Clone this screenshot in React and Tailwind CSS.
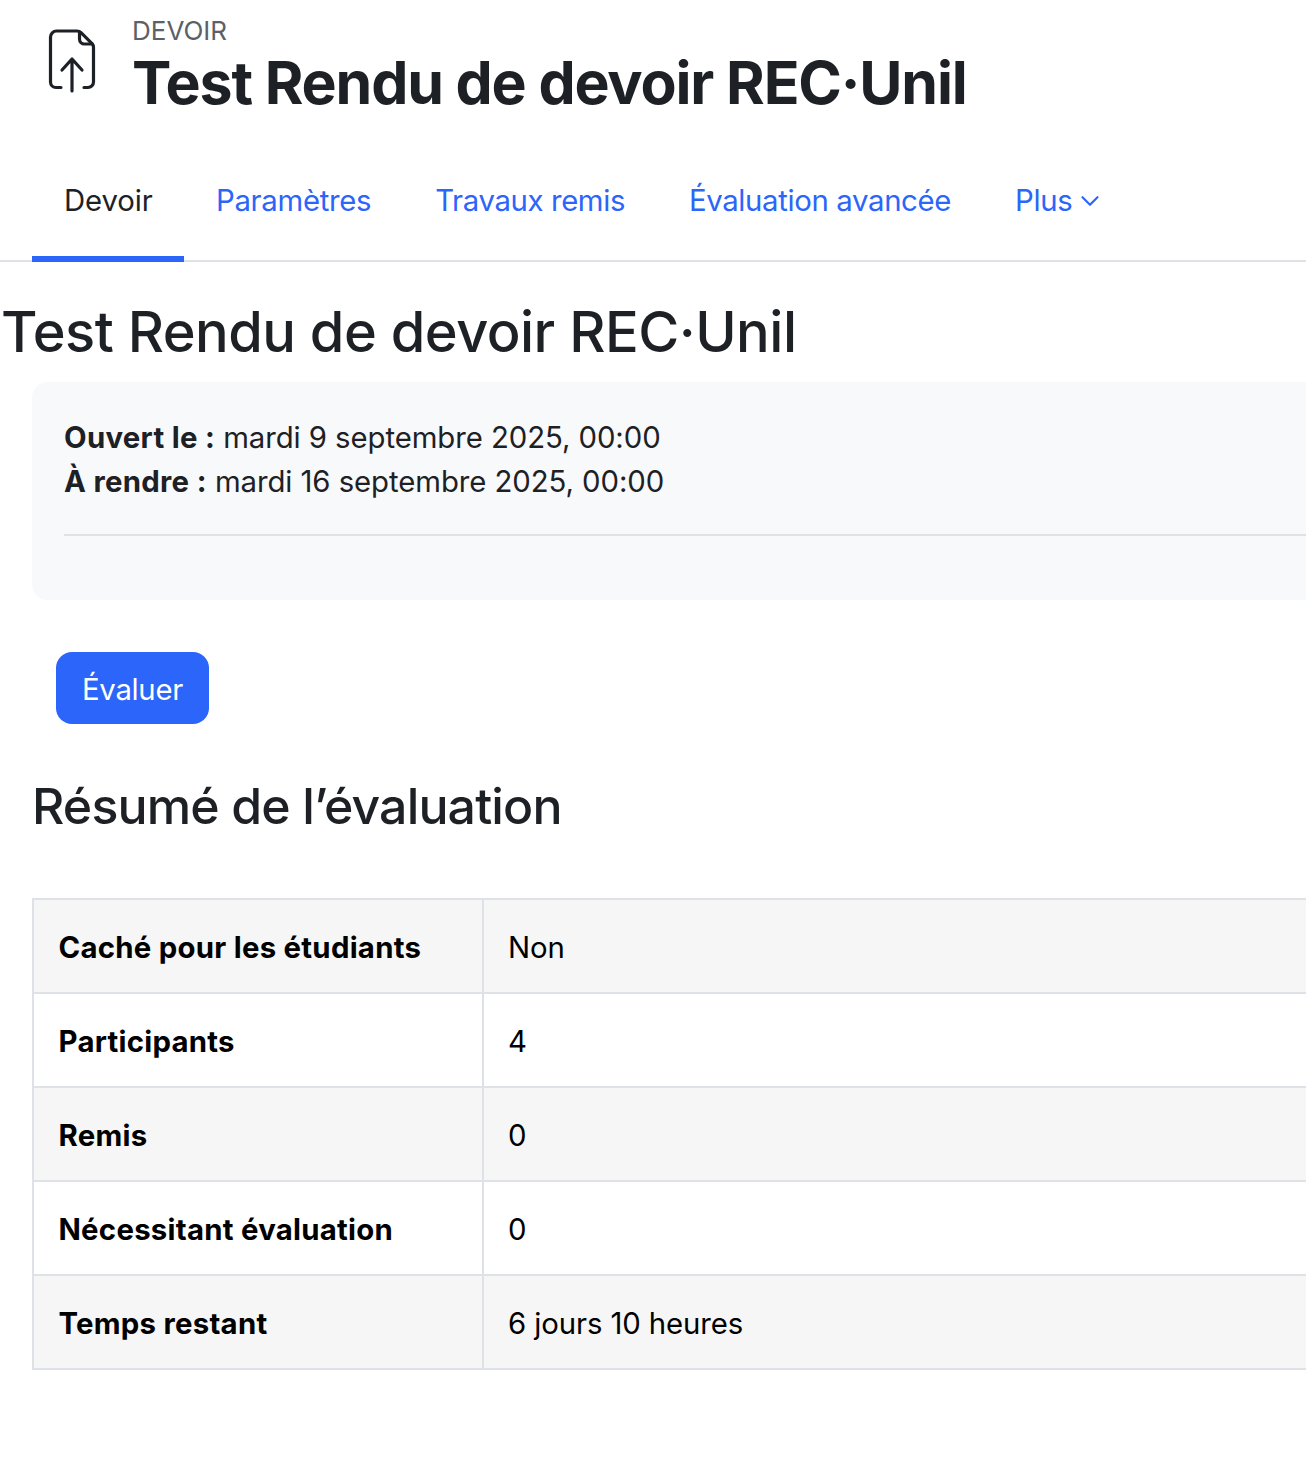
import { ChevronDown } from "lucide-react";

const rows = [
	["Caché pour les étudiants", "Non"],
	["Participants", "4"],
	["Remis", "0"],
	["Nécessitant évaluation", "0"],
	["Temps restant", "6 jours 10 heures"],
];

function FileUpIcon() {
	return (
		<svg width="48" height="64" viewBox="0 0 48 64" fill="none" stroke="#1d2125" strokeWidth="3.2" strokeLinecap="round" strokeLinejoin="round">
			<path d="M13 58.5H8A5.5 5.5 0 0 1 2.5 53V8A6 6 0 0 1 8.5 2H29c1.5 0 3 .6 4 1.6l10.8 10.8c1 1 1.7 2.5 1.7 4V53a5.5 5.5 0 0 1-5.5 5.5H36" />
			<path d="M31.5 3v7a5 5 0 0 0 5 5h8" />
			<path d="M24 62V30M14 41l10-11 10 11" />
		</svg>
	);
}

export default function App() {
	return (
		<div className="h-[1466px] w-full overflow-hidden bg-white font-['Inter',sans-serif] text-[29.33px] leading-[44px] text-[#1d2125]">
			<header className="flex h-[148px] pl-[48px]">
				<div className="mt-[29px]">
					<FileUpIcon />
				</div>
				<div className="ml-[36px] mt-[14px]">
					<div className="text-[26px] leading-[34px] text-[#5b6167]">DEVOIR</div>
					<h1 className="mt-[-1px] text-[59px] font-bold leading-[72px] tracking-[-1.16px]">Test Rendu de devoir REC·Unil</h1>
				</div>
			</header>

			<nav className="flex h-[114px] items-stretch border-b-2 border-[#dee2e6] pl-[32px] tracking-[-0.3px]">
				<a className="mb-[-2px] flex w-[152px] items-center border-b-[6px] border-[#2b65f9] px-[32px] pb-[2px] tracking-[-0.1px] text-[#1d2125]">Devoir</a>
				<a className="flex items-center px-[32px] pb-[6px] text-[#2b65f9]">Paramètres</a>
				<a className="flex items-center px-[32px] pb-[6px] tracking-[-0.38px] text-[#2b65f9]">Travaux remis</a>
				<a className="flex items-center px-[32px] pb-[6px] tracking-[-0.35px] text-[#2b65f9]">Évaluation avancée</a>
				<a className="flex items-center gap-[2px] px-[32px] pb-[6px] text-[#2b65f9]">
					Plus
					<ChevronDown size={30} strokeWidth={1.7} />
				</a>
			</nav>

			<h2 className="mt-[37px] pl-[1px] text-[56px] font-medium leading-[67px] tracking-[-0.52px]">Test Rendu de devoir REC·Unil</h2>

			<section className="ml-[32px] mr-[-40px] mt-[16px] h-[218px] rounded-[16px] bg-[#f8f9fa] px-[32px] pt-[34px]">
				<div className="tracking-[-0.07px]">
					<strong className="font-bold tracking-[0.3px]">Ouvert le :</strong> mardi 9 septembre 2025, 00:00
				</div>
				<div className="tracking-[-0.07px]">
					<strong className="font-bold tracking-[0.3px]">À rendre :</strong> mardi 16 septembre 2025, 00:00
				</div>
				<hr className="mt-[30px] border-t-2 border-[#dee2e6]" />
			</section>

			<button className="ml-[56px] mt-[52px] block h-[72px] w-[153px] rounded-[16px] bg-[#2b65f9] pt-[4px] tracking-[-0.3px] text-white">Évaluer</button>

			<h3 className="ml-[32px] mt-[52px] text-[50px] font-medium leading-[60px] tracking-[-0.85px]">Résumé de l’évaluation</h3>

			<table className="ml-[32px] mt-[62px] w-[1400px] border-collapse text-[#000]">
				<tbody>
					{rows.map(([label, value], i) => (
						<tr key={label} className={`h-[94px] ${i % 2 === 0 ? "bg-[#f6f6f6]" : "bg-white"}`}>
							<th className="w-[450px] border-2 border-[#dee2e6] pl-[24.5px] pr-[24px] pt-[4px] text-left font-bold tracking-[0.27px]">{label}</th>
							<td className="border-2 border-[#dee2e6] pl-[24px] pr-[24px] pt-[4px] tracking-[-0.1px]">{value}</td>
						</tr>
					))}
				</tbody>
			</table>
		</div>
	);
}
